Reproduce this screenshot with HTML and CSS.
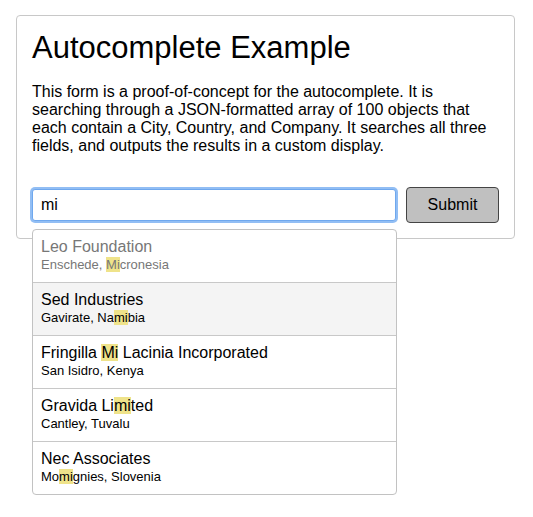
FILE: index.html
```html
<!DOCTYPE html>
<html lang="en">
<head>
<meta charset="utf-8">
<title>Autocomplete Example</title>
<link rel="stylesheet" href="styles.css">
</head>
<body>
<div class="card">
  <h1 class="title">Autocomplete Example</h1>
  <p class="intro">This form is a proof-of-concept for the autocomplete. It is searching through a JSON-formatted array of 100 objects that each contain a City, Country, and Company. It searches all three fields, and outputs the results in a custom display.</p>
  <form class="search-form">
    <div class="field">
      <input class="search-input" type="text" value="mi">
      <ul class="suggestions">
        <li class="suggestion is-muted">
          <div class="company">Leo Foundation</div>
          <div class="place">Enschede, <mark class="hl">Mi</mark>cronesia</div>
        </li>
        <li class="suggestion is-active">
          <div class="company">Sed Industries</div>
          <div class="place">Gavirate, Na<mark class="hl">mi</mark>bia</div>
        </li>
        <li class="suggestion">
          <div class="company">Fringilla <mark class="hl">Mi</mark> Lacinia Incorporated</div>
          <div class="place">San Isidro, Kenya</div>
        </li>
        <li class="suggestion">
          <div class="company">Gravida Li<mark class="hl">mi</mark>ted</div>
          <div class="place">Cantley, Tuvalu</div>
        </li>
        <li class="suggestion">
          <div class="company">Nec Associates</div>
          <div class="place">Mo<mark class="hl">mi</mark>gnies, Slovenia</div>
        </li>
      </ul>
    </div>
    <button class="submit" type="button">Submit</button>
  </form>
</div>
</body>
</html>
```
FILE: styles.css
```css
html, body {
  margin: 0;
  padding: 0;
  background: #ffffff;
}
body {
  box-sizing: border-box;
  min-height: 517px;
  font-family: "Liberation Sans", Arial, Helvetica, sans-serif;
  color: #000;
  padding: 15px 16px;
}
.card {
  box-sizing: border-box;
  width: 499px;
  border: 1px solid #c8c8c8;
  border-radius: 4px;
  padding: 15px 15px 15px 15px;
}
.title {
  margin: 1px 0 0 0;
  font-size: 31px;
  line-height: 31px;
  font-weight: normal;
}
.intro {
  margin: 20px 0 0 0;
  font-size: 16px;
  line-height: 18px;
}
.search-form {
  margin: 32px 0 0 0;
  display: flex;
  align-items: center;
  gap: 10px;
}
.field {
  position: relative;
  width: 364px;
}
.search-input {
  box-sizing: border-box;
  display: block;
  width: 364px;
  height: 32px;
  margin: 1px 0;
  padding: 0 8px;
  border: 1px solid #6fa8ee;
  border-radius: 3px;
  box-shadow: 0 0 0 2px rgba(110, 168, 240, 0.75);
  outline: none;
  font-family: inherit;
  font-size: 16px;
  color: #000;
}
.submit {
  box-sizing: border-box;
  width: 93px;
  height: 36px;
  background: #c0c0c0;
  border: 1px solid #444;
  border-radius: 4px;
  font-family: inherit;
  font-size: 16px;
  color: #000;
  padding: 0;
}
.suggestions {
  position: absolute;
  z-index: 2;
  top: 41px;
  left: 0;
  box-sizing: border-box;
  width: 365px;
  margin: 0;
  padding: 0;
  list-style: none;
  background: #fff;
  border: 1px solid #c2c2c2;
  border-radius: 4px;
  overflow: hidden;
}
.suggestion {
  padding: 8px 8px;
  border-bottom: 1px solid #c8c8c8;
}
.suggestion:last-child {
  border-bottom: none;
}
.suggestion.is-active {
  background: #f4f4f4;
}
.suggestion.is-muted {
  color: #777;
}
.company {
  font-size: 16px;
  line-height: 18px;
}
.place {
  font-size: 13px;
  line-height: 18px;
}
.hl {
  background: #efe38a;
  color: inherit;
}
```
